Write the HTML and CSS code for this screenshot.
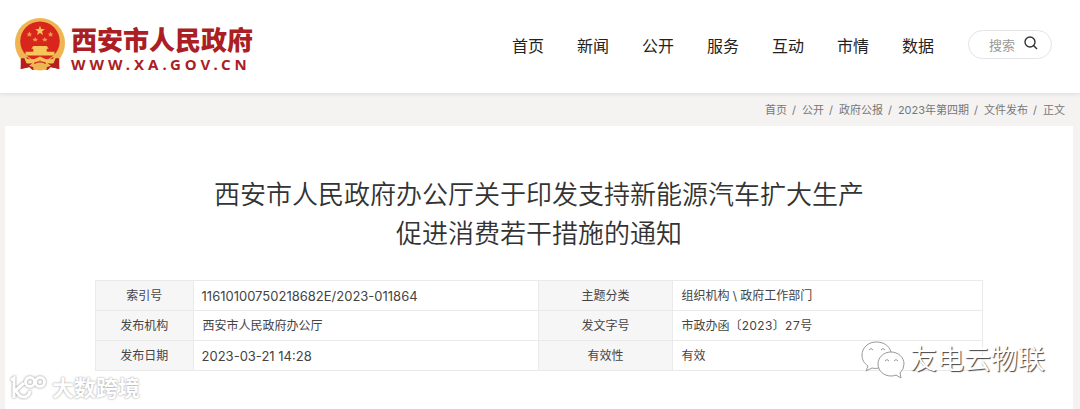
FILE: index.html
```
<!DOCTYPE html>
<html lang="zh-CN">
<head>
    <meta charset="utf-8">
    <title>西安市人民政府</title>
    <link rel="stylesheet" href="styles.css">
</head>
<body>
    <header class="header">
        <a class="logo" href="#">
            <svg class="emblem" viewBox="0 0 54 56" aria-hidden="true">
                <path d="M8 36 L7 53 L16 51 L19 54 L27 52 L35 54 L38 51 L47 53 L46 36z" fill="#b5201f"/>
                <circle cx="27" cy="26" r="26" fill="#efb552"/>
                <circle cx="27" cy="24" r="20.500" fill="#d8261d"/>
                <path d="M27 8 l1.300 3.400 3.700 .2 -2.900 2.300 1 3.600 -3.100 -2 -3.100 2 1 -3.600 -2.900 -2.300 3.700 -.2z" fill="#f7c65b"/>
                <path d="M16 14l1 2 2 .2-1.600 1.200.6 2-2-1-2 1 .6-2-1.600-1.200 2-.2zM38 14l1 2 2 .2-1.600 1.200.6 2-2-1-2 1 .6-2-1.600-1.200 2-.2zM22 20l1 1.500 2 .2-1.600 1.200.4 1.800-1.800-1-1.800 1 .4-1.800-1.600-1.200 2-.2zM32 20l1 1.500 2 .2-1.600 1.200.4 1.800-1.800-1-1.800 1 .4-1.800-1.600-1.200 2-.2z" fill="#ef9a45"/>
                <path d="M20 29 h14 l2 3 h-2 v3 h8 v4 h-30 v-4 h8 v-3 h-2z" fill="#f7c65b"/>
                <path d="M7 42 L14 41 L20 46 L14 51 L7 53z M47 42 L40 41 L34 46 L40 51 L47 53z" fill="#b5201f"/>
                <path d="M10 40 Q17 46 27 40 Q37 46 44 40 L41 47 Q34 48 27 44 Q20 48 13 47z" fill="#f5c159"/>
                <path d="M20 47 Q27 43 34 47 L34 53 Q27 56 20 53z" fill="#efb552"/>
                <path d="M21 47 Q27 44 33 47" fill="none" stroke="#c8221d" stroke-width="1.500"/>
            </svg>
            <span class="logo-text">
                <strong class="logo-name">西安市人民政府</strong>
                <span class="logo-url">WWW.XA.GOV.CN</span>
            </span>
        </a>
        <nav class="nav">
            <a href="#">首页</a>
            <a href="#">新闻</a>
            <a href="#">公开</a>
            <a href="#">服务</a>
            <a href="#">互动</a>
            <a href="#">市情</a>
            <a href="#">数据</a>
        </nav>
        <form class="search">
            <input class="search-input" type="text" placeholder="搜索" aria-label="搜索">
            <button class="search-button" type="button" aria-label="搜索">
                <svg viewBox="0 0 14 14" width="14" height="14" fill="none" stroke="#333" stroke-width="1.400">
                    <circle cx="6" cy="6" r="5"/>
                    <path d="M9.500 9.500 L13 13"/>
                </svg>
            </button>
        </form>
    </header>

    <nav class="breadcrumb">
        <a href="#">首页</a><span>/</span>
        <a href="#">公开</a><span>/</span>
        <a href="#">政府公报</a><span>/</span>
        <a href="#">2023年第四期</a><span>/</span>
        <a href="#">文件发布</a><span>/</span>
        <a href="#">正文</a>
    </nav>

    <main class="panel">
        <h1 class="title">西安市人民政府办公厅关于印发支持新能源汽车扩大生产<br>促进消费若干措施的通知</h1>
        <table class="info">
            <colgroup>
                <col class="col-label">
                <col class="col-value">
                <col class="col-label-wide">
                <col>
            </colgroup>
            <tr>
                <th scope="row">索引号</th>
                <td class="number">11610100750218682E/2023-011864</td>
                <th scope="row">主题分类</th>
                <td>组织机构 \ 政府工作部门</td>
            </tr>
            <tr>
                <th scope="row">发布机构</th>
                <td>西安市人民政府办公厅</td>
                <th scope="row">发文字号</th>
                <td>市政办函〔2023〕27号</td>
            </tr>
            <tr>
                <th scope="row">发布日期</th>
                <td class="number">2023-03-21 14:28</td>
                <th scope="row">有效性</th>
                <td>有效</td>
            </tr>
        </table>
    </main>

    <!-- watermarks over the page -->
    <div class="mark mark-right">
        <svg viewBox="0 0 44 38" width="44" height="38" fill="#fff" stroke="#999" stroke-width="1" aria-hidden="true">
            <path d="M30 11 C28 4 22 1 15 1 C7 1 1 7 1 14 C1 19 3 22 7 25 L5 30 L11 27 Q14 28 18 27"/>
            <path d="M30 11 C22 11 17 17 17 23 C17 30 23 35 30 35 Q33 35 35 34 L40 37 L39 32 Q43 28 43 23 C43 16 37 11 30 11z"/>
            <path d="M8 9 q2-3 4 0 M20 9 q2-3 4 0 M24 20 q2-3 4 0 M33 20 q2-3 4 0" fill="none"/>
        </svg>
        <span>友电云物联</span>
    </div>
    <div class="mark mark-left">
        <svg viewBox="0 0 38 28" width="38" height="28" fill="none" stroke="#fff" stroke-width="3" aria-hidden="true">
            <path d="M2 6 L5 4 V24 M15 9 L7 16 Q10 24 16 23 Q20 22 21 17"/>
            <circle cx="21" cy="8" r="4.500"/>
            <circle cx="31" cy="8" r="4.500"/>
        </svg>
        <span>大数跨境</span>
    </div>
</body>
</html>
```
FILE: styles.css
```
* {
    box-sizing: border-box;
}

body {
    margin: 0;
    min-height: 100vh;
    display: flex;
    flex-direction: column;
    position: relative;
    background-color: #f4f3f2;
    color: #333;
    font-family: Inter, "Noto Sans CJK SC", sans-serif;
}

a {
    color: inherit;
    text-decoration: none;
}

.header {
    display: flex;
    align-items: center;
    height: 93px;
    padding: 0 28px 4px 14px;
    background-color: #fff;
    box-shadow: 0 1px 4px #d8dadc;
}

.logo {
    display: flex;
    align-items: center;
    gap: 5px;
}

.emblem {
    width: 52px;
    height: 54px;
}

.logo-text {
    display: flex;
    flex-direction: column;
    padding-top: 12px;
    color: #ab1e23;
}

.logo-name {
    font-size: 26px;
    line-height: 26px;
    font-weight: 900;
}

.logo-url {
    font-family: "Noto Sans", sans-serif;
    font-size: 15px;
    line-height: 20px;
    font-weight: bold;
    letter-spacing: 4px;
}

.nav {
    display: flex;
    gap: 33px;
    margin-left: auto;
    font-size: 16px;
    color: #222;
}

.search {
    display: flex;
    align-items: center;
    width: 84px;
    height: 29px;
    margin-left: 34px;
    padding: 0 13px 0 20px;
    border: 1px solid #e2e4e8;
    border-radius: 15px;
}

.search-input {
    flex: 1;
    min-width: 0;
    padding: 0;
    border: none;
    outline: none;
    background: none;
    font-family: inherit;
    font-size: 13px;
}

.search-input::placeholder {
    color: #999;
}

.search-button {
    display: flex;
    padding: 0 0 4px;
    border: none;
    background: none;
}

.breadcrumb {
    display: flex;
    justify-content: flex-end;
    gap: 5px;
    padding: 2px 15px 0 0;
    font-size: 11px;
    line-height: 31px;
    color: #777;
}

.breadcrumb span {
    padding-right: 1px;
}

.panel {
    flex: 1;
    margin: 0 7px 0 5px;
    padding: 49px 90px 38px;
    background-color: #fff;
}

.title {
    margin: 0 0 27px;
    font-size: 26px;
    line-height: 39px;
    font-weight: 350;
    text-align: center;
}

.info {
    width: 100%;
    table-layout: fixed;
    border-collapse: collapse;
    font-size: 12px;
    font-variant-numeric: tabular-nums;
    line-height: 18px;
    color: #444;
}

.info th,
.info td {
    height: 30px;
    padding: 0 9px;
    border: 1px solid #eaeaea;
    font-weight: normal;
    text-align: left;
}

.info th {
    background-color: #f6f6f6;
    text-align: center;
}

.info .number {
    padding-left: 8px;
    font-size: 13px;
    font-variant-numeric: normal;
}

.col-label {
    width: 11%;
}

.col-value {
    width: 39%;
}

.col-label-wide {
    width: 15%;
}

.mark {
    position: absolute;
    display: flex;
    align-items: center;
    color: #fff;
}

.mark-right {
    right: 35px;
    bottom: 29px;
    gap: 5px;
    font-size: 27px;
    line-height: 40px;
    text-shadow: 1px 1px 1px #444;
}

.mark-left {
    left: 9px;
    bottom: 5px;
    gap: 5px;
    font-size: 22px;
    line-height: 32px;
    font-weight: bold;
    text-shadow: 0 0 2px #888;
}

.mark-left svg {
    filter: drop-shadow(0 0 1px #888);
}
```
